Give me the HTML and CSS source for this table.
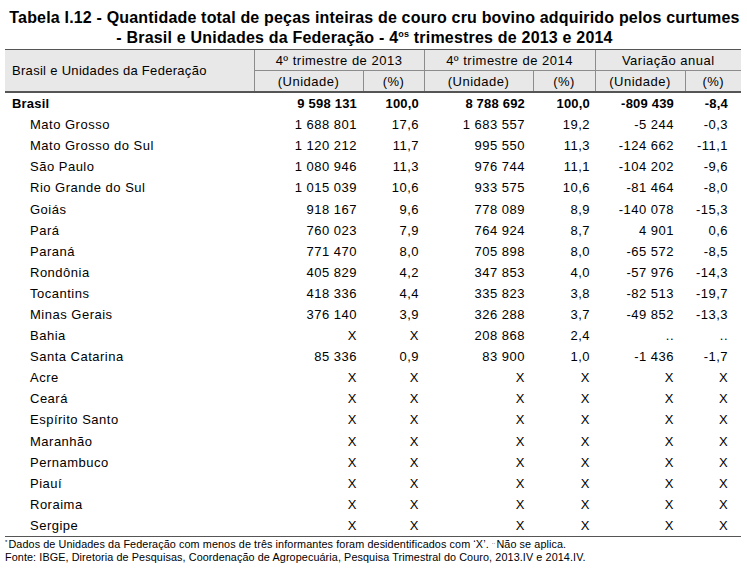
FILE: index.html
```html
<!DOCTYPE html>
<html lang="pt-BR">
<head>
<meta charset="utf-8">
<title>Tabela I.12</title>
<link rel="stylesheet" href="styles.css">
</head>
<body>
<div class="page">
  <h1 class="title">
    <span class="title-line first">Tabela I.12 - Quantidade total de peças inteiras de couro cru bovino adquirido pelos curtumes</span>
    <span class="title-line second">- Brasil e Unidades da Federação - 4<sup>os</sup> trimestres de 2013 e 2014</span>
  </h1>
  <table class="data">
    <colgroup>
      <col class="c-name"><col class="c-u"><col class="c-p"><col class="c-u"><col class="c-p2"><col class="c-v"><col class="c-vp">
    </colgroup>
    <thead>
      <tr class="h1">
        <th rowspan="2" class="name-h">Brasil e Unidades da Federação</th>
        <th colspan="2">4º trimestre de 2013</th>
        <th colspan="2">4º trimestre de 2014</th>
        <th colspan="2">Variação anual</th>
      </tr>
      <tr class="h2">
        <th>(Unidade)</th><th>(%)</th>
        <th>(Unidade)</th><th>(%)</th>
        <th>(Unidade)</th><th>(%)</th>
      </tr>
    </thead>
    <tbody>
      <tr class="total"><td>Brasil</td><td class="n1">9 598 131</td><td class="n2">100,0</td><td class="n3">8 788 692</td><td class="n4">100,0</td><td class="n5">-809 439</td><td class="n6">-8,4</td></tr>
      <tr><td>Mato Grosso</td><td class="n1">1 688 801</td><td class="n2">17,6</td><td class="n3">1 683 557</td><td class="n4">19,2</td><td class="n5">-5 244</td><td class="n6">-0,3</td></tr>
      <tr><td>Mato Grosso do Sul</td><td class="n1">1 120 212</td><td class="n2">11,7</td><td class="n3">995 550</td><td class="n4">11,3</td><td class="n5">-124 662</td><td class="n6">-11,1</td></tr>
      <tr><td>São Paulo</td><td class="n1">1 080 946</td><td class="n2">11,3</td><td class="n3">976 744</td><td class="n4">11,1</td><td class="n5">-104 202</td><td class="n6">-9,6</td></tr>
      <tr><td>Rio Grande do Sul</td><td class="n1">1 015 039</td><td class="n2">10,6</td><td class="n3">933 575</td><td class="n4">10,6</td><td class="n5">-81 464</td><td class="n6">-8,0</td></tr>
      <tr><td>Goiás</td><td class="n1">918 167</td><td class="n2">9,6</td><td class="n3">778 089</td><td class="n4">8,9</td><td class="n5">-140 078</td><td class="n6">-15,3</td></tr>
      <tr><td>Pará</td><td class="n1">760 023</td><td class="n2">7,9</td><td class="n3">764 924</td><td class="n4">8,7</td><td class="n5">4 901</td><td class="n6">0,6</td></tr>
      <tr><td>Paraná</td><td class="n1">771 470</td><td class="n2">8,0</td><td class="n3">705 898</td><td class="n4">8,0</td><td class="n5">-65 572</td><td class="n6">-8,5</td></tr>
      <tr><td>Rondônia</td><td class="n1">405 829</td><td class="n2">4,2</td><td class="n3">347 853</td><td class="n4">4,0</td><td class="n5">-57 976</td><td class="n6">-14,3</td></tr>
      <tr><td>Tocantins</td><td class="n1">418 336</td><td class="n2">4,4</td><td class="n3">335 823</td><td class="n4">3,8</td><td class="n5">-82 513</td><td class="n6">-19,7</td></tr>
      <tr><td>Minas Gerais</td><td class="n1">376 140</td><td class="n2">3,9</td><td class="n3">326 288</td><td class="n4">3,7</td><td class="n5">-49 852</td><td class="n6">-13,3</td></tr>
      <tr><td>Bahia</td><td class="n1">X</td><td class="n2">X</td><td class="n3">208 868</td><td class="n4">2,4</td><td class="n5">..</td><td class="n6">..</td></tr>
      <tr><td>Santa Catarina</td><td class="n1">85 336</td><td class="n2">0,9</td><td class="n3">83 900</td><td class="n4">1,0</td><td class="n5">-1 436</td><td class="n6">-1,7</td></tr>
      <tr><td>Acre</td><td class="n1">X</td><td class="n2">X</td><td class="n3">X</td><td class="n4">X</td><td class="n5">X</td><td class="n6">X</td></tr>
      <tr><td>Ceará</td><td class="n1">X</td><td class="n2">X</td><td class="n3">X</td><td class="n4">X</td><td class="n5">X</td><td class="n6">X</td></tr>
      <tr><td>Espírito Santo</td><td class="n1">X</td><td class="n2">X</td><td class="n3">X</td><td class="n4">X</td><td class="n5">X</td><td class="n6">X</td></tr>
      <tr><td>Maranhão</td><td class="n1">X</td><td class="n2">X</td><td class="n3">X</td><td class="n4">X</td><td class="n5">X</td><td class="n6">X</td></tr>
      <tr><td>Pernambuco</td><td class="n1">X</td><td class="n2">X</td><td class="n3">X</td><td class="n4">X</td><td class="n5">X</td><td class="n6">X</td></tr>
      <tr><td>Piauí</td><td class="n1">X</td><td class="n2">X</td><td class="n3">X</td><td class="n4">X</td><td class="n5">X</td><td class="n6">X</td></tr>
      <tr><td>Roraima</td><td class="n1">X</td><td class="n2">X</td><td class="n3">X</td><td class="n4">X</td><td class="n5">X</td><td class="n6">X</td></tr>
      <tr><td>Sergipe</td><td class="n1">X</td><td class="n2">X</td><td class="n3">X</td><td class="n4">X</td><td class="n5">X</td><td class="n6">X</td></tr>
    </tbody>
  </table>
  <div class="notes">
    <p><sup>*</sup>Dados de Unidades da Federação com menos de três informantes foram desidentificados com ‘X’. <sup>..</sup>Não se aplica.</p>
    <p>Fonte: IBGE, Diretoria de Pesquisas, Coordenação de Agropecuária, Pesquisa Trimestral do Couro, 2013.IV e 2014.IV.</p>
  </div>
</div>
</body>
</html>
```
FILE: styles.css
```css
html, body {
  margin: 0;
  padding: 0;
  background: #ffffff;
}
.page {
  width: 747px;
  padding: 8px 6px 0 5px;
  box-sizing: border-box;
  font-family: "Liberation Sans", Arial, sans-serif;
  color: #000;
}
.title {
  margin: 0 0 1px 3px;
  font-size: 16px;
  font-weight: bold;
  line-height: 20px;
  text-align: center;
}
.title-line {
  display: block;
  white-space: nowrap;
}
.title-line.first {
  letter-spacing: 0.18px;
}
.title-line.second {
  padding-right: 20px;
  letter-spacing: 0.2px;
}
.title sup {
  font-size: 9px;
  vertical-align: 6px;
  line-height: 0;
}
.data {
  border-collapse: collapse;
  table-layout: fixed;
  width: 736px;
  font-size: 13px;
  letter-spacing: 0.5px;
}
.c-name { width: 249px; }
.c-u { width: 109px; }
.c-p { width: 61px; }
.c-p2 { width: 62px; }
.c-v { width: 90px; }
.c-vp { width: 56px; }
thead th {
  background: #e8e8e8;
  font-weight: normal;
  text-align: center;
  padding: 0;
  border-left: 1px solid #8c8c8c;
  border-bottom: 1px solid #8c8c8c;
  white-space: nowrap;
}
thead tr.h1 th {
  border-top: 1px solid #555;
  height: 20px;
}
thead tr.h2 th {
  border-bottom: 2px solid #555;
  height: 20px;
}
thead th.name-h {
  border-left: none;
  text-align: left;
  padding-left: 7px;
  letter-spacing: 0.3px;
  border-bottom: 2px solid #555;
}
tbody td {
  height: 21.1px;
  padding: 0;
  text-align: right;
  white-space: nowrap;
}
tbody td:first-child {
  text-align: left;
  padding-left: 25px;
}
tbody tr.total td {
  font-weight: bold;
  letter-spacing: 0.2px;
}
tbody tr.total td:first-child {
  padding-left: 7px;
}
tbody tr:last-child td {
  border-bottom: 1px solid #555;
}
td.n1 { padding-right: 6px; }
td.n2 { padding-right: 5px; }
td.n3 { padding-right: 8px; }
td.n4 { padding-right: 5px; }
td.n5 { padding-right: 11px; }
td.n6 { padding-right: 13px; }
.notes {
  font-size: 10.8px;
  line-height: 12.6px;
  padding-top: 1px;
  letter-spacing: 0.1px;
}
.notes p {
  margin: 0;
  white-space: nowrap;
}
.notes sup {
  font-size: 6px;
  vertical-align: 4px;
  line-height: 0;
  margin-right: 1px;
}
```
